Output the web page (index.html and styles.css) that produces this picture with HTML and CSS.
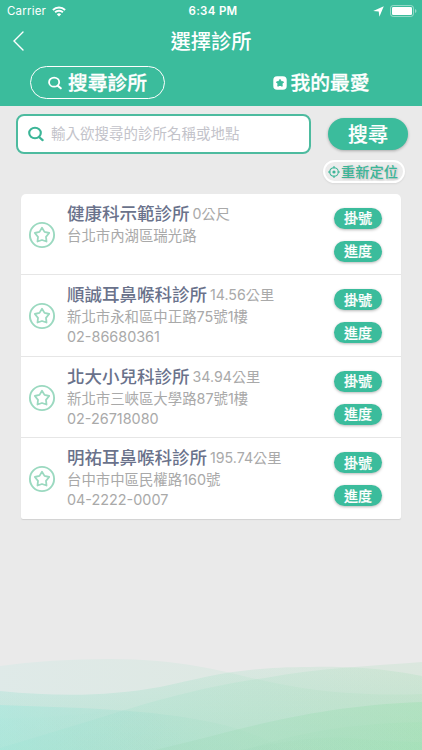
FILE: index.html
```html
<!DOCTYPE html>
<html lang="zh-Hant">
<head>
    <meta charset="utf-8">
    <meta name="viewport" content="width=device-width, initial-scale=1">
    <title>選擇診所</title>
    <link rel="stylesheet" href="styles.css">
</head>
<body>
    <svg class="symbols" aria-hidden="true">
        <symbol id="icon-search" viewBox="0 0 16 16">
            <ellipse cx="7" cy="7" rx="5.8" ry="5.2" fill="none" stroke="currentColor" stroke-width="2.1"/>
            <path d="M11 11l3.6 3.1" fill="none" stroke="currentColor" stroke-width="2.3" stroke-linecap="round"/>
        </symbol>
        <symbol id="icon-star" viewBox="0 0 28 28">
            <circle cx="14" cy="14" r="12.1" fill="none" stroke="currentColor" stroke-width="1.9"/>
            <path d="M14 6.8l2.5 4.1 4.7 1.1-3.2 3.8.5 4.7-4.5-1.5-4.5 1.5.5-4.7L6.800 12l4.700-1.100z" fill="none" stroke="currentColor" stroke-width="1.8" stroke-linejoin="round"/>
        </symbol>
    </svg>

    <header class="header">
        <div class="status-bar">
            <div class="carrier">
                <span>Carrier</span>
                <svg class="wifi" viewBox="0 0 14 11">
                    <path d="M.9 4a8.7 8.7 0 0 1 12.2 0M3.1 6.3a5.6 5.6 0 0 1 7.8 0" fill="none" stroke="#fff" stroke-width="1.9"/>
                    <path d="M7 10.6L4.8 8.3a3.1 3.1 0 0 1 4.4 0z" fill="#fff"/>
                </svg>
            </div>
            <span class="time">6:34 PM</span>
            <div class="indicators">
                <svg class="location" viewBox="0 0 10 10"><path d="M9.8.2L5.8 9.8 5.2 5 .2 4.5z" fill="#fff"/></svg>
                <svg class="battery" viewBox="0 0 27 12">
                    <rect x=".5" y=".5" width="23" height="11" rx="2.7" fill="none" stroke="#fff" stroke-opacity=".45"/>
                    <rect x="2" y="2" width="20" height="8" rx="1.3" fill="#fff"/>
                    <path d="M25 4a2.1 2.1 0 0 1 0 4z" fill="#fff" fill-opacity=".45"/>
                </svg>
            </div>
        </div>
        <div class="title-bar">
            <svg class="back" viewBox="0 0 11 20"><path d="M10 1L1 10l9 9" fill="none" stroke="#fff" stroke-width="1.4" stroke-linecap="round"/></svg>
            <h1>選擇診所</h1>
        </div>
        <nav class="tabs">
            <a class="tab active">
                <svg class="tab-search"><use href="#icon-search"/></svg>
                <span>搜尋診所</span>
            </a>
            <a class="tab">
                <svg class="tab-star" viewBox="0 0 14 14">
                    <rect x=".3" y=".3" width="13.4" height="13.4" rx="3.8" fill="#fff"/>
                    <path d="M7 3.4l1.2 2 2.4.6-1.6 1.8.2 2.4L7 9.300l-2.200.9.200-2.400L3.400 6l2.400-.6z" fill="#3bbc9c" stroke="#3bbc9c" stroke-width="1" stroke-linejoin="round"/>
                </svg>
                <span>我的最愛</span>
            </a>
        </nav>
    </header>

    <main class="content">
        <div class="search">
            <div class="search-box">
                <svg class="search-icon"><use href="#icon-search"/></svg>
                <span>輸入欲搜尋的診所名稱或地點</span>
            </div>
            <div class="search-actions">
                <button class="btn btn-search">搜尋</button>
                <button class="btn-locate">
                    <svg viewBox="0 0 12 12">
                        <circle cx="6" cy="6" r="4.3" fill="none" stroke="currentColor" stroke-width="1.1"/>
                        <circle cx="6" cy="6" r="1.6" fill="currentColor"/>
                        <path d="M6 0v2.5M6 9.5v2.5M0 6h2.5M9.5 6h2.5" stroke="currentColor" stroke-width="1.1"/>
                    </svg>
                    <span>重新定位</span>
                </button>
            </div>
        </div>

        <ul class="clinic-list">
            <li class="clinic">
                <svg class="favorite"><use href="#icon-star"/></svg>
                <div class="info">
                    <div class="heading"><h2>健康科示範診所</h2><span>0公尺</span></div>
                    <p>台北市內湖區瑞光路</p>
                </div>
                <div class="actions">
                    <button class="btn btn-small">掛號</button>
                    <button class="btn btn-small">進度</button>
                </div>
            </li>
            <li class="clinic">
                <svg class="favorite"><use href="#icon-star"/></svg>
                <div class="info">
                    <div class="heading"><h2>順誠耳鼻喉科診所</h2><span>14.56公里</span></div>
                    <p>新北市永和區中正路75號1樓</p>
                    <p class="phone">02-86680361</p>
                </div>
                <div class="actions">
                    <button class="btn btn-small">掛號</button>
                    <button class="btn btn-small">進度</button>
                </div>
            </li>
            <li class="clinic">
                <svg class="favorite"><use href="#icon-star"/></svg>
                <div class="info">
                    <div class="heading"><h2>北大小兒科診所</h2><span>34.94公里</span></div>
                    <p>新北市三峽區大學路87號1樓</p>
                    <p class="phone">02-26718080</p>
                </div>
                <div class="actions">
                    <button class="btn btn-small">掛號</button>
                    <button class="btn btn-small">進度</button>
                </div>
            </li>
            <li class="clinic">
                <svg class="favorite"><use href="#icon-star"/></svg>
                <div class="info">
                    <div class="heading"><h2>明祐耳鼻喉科診所</h2><span>195.74公里</span></div>
                    <p>台中市中區民權路160號</p>
                    <p class="phone">04-2222-0007</p>
                </div>
                <div class="actions">
                    <button class="btn btn-small">掛號</button>
                    <button class="btn btn-small">進度</button>
                </div>
            </li>
        </ul>
    </main>

    <svg class="waves" viewBox="0 0 422 110" preserveAspectRatio="none">
        <defs>
            <linearGradient id="mist" x1="0" x2="1"><stop offset="0" stop-color="#b8e9e1" stop-opacity=".22"/><stop offset="1" stop-color="#a8ddb5" stop-opacity=".18"/></linearGradient>
            <linearGradient id="teal" x1="0" x2="1"><stop offset="0" stop-color="#a4e4dc" stop-opacity=".28"/><stop offset="1" stop-color="#a0dcb0" stop-opacity=".2"/></linearGradient>
            <linearGradient id="aqua" x1="0" x2="1"><stop offset="0" stop-color="#96e8dc" stop-opacity=".38"/><stop offset=".5" stop-color="#96dccb" stop-opacity=".24"/><stop offset="1" stop-color="#9cdcb4" stop-opacity=".05"/></linearGradient>
            <linearGradient id="haze" x1="0" y1="0" x2="0" y2="1"><stop offset="0" stop-color="#98dcbc" stop-opacity="0"/><stop offset="1" stop-color="#98dcbc" stop-opacity=".3"/></linearGradient>
            <linearGradient id="leaf" x1="0" x2="1"><stop offset="0" stop-color="#9cd8b8" stop-opacity=".28"/><stop offset="1" stop-color="#96dfac" stop-opacity=".36"/></linearGradient>
        </defs>
        <path d="M0 26Q50 19 110 19C190 19 230 34 270 42C320 53 375 56 422 54V110H0z" fill="url(#mist)"/>
        <path d="M0 51C60 57 110 56 160 47C210 36 240 27 310 27C360 26 390 30 422 36V110H0z" fill="url(#teal)"/>
        <path d="M0 108Q60 90 112 74C170 56 215 45 265 38C320 28 370 26 422 22V110H0z" fill="url(#teal)"/>
        <path d="M0 51C60 57 110 56 160 47C210 36 240 27 310 27C360 26 390 30 422 36V110H0z" fill="url(#haze)"/>
        <path d="M0 65C70 68 150 68 220 84Q260 94 285 110H0z" fill="url(#aqua)"/>
        <path d="M0 78Q55 79 110 70L155 75L195 110H0z" fill="url(#aqua)" opacity=".15"/>
        <path d="M155 110C240 90 310 66 422 62V110z" fill="url(#leaf)"/>
        <path d="M245 110C310 88 370 83 422 82V110z" fill="url(#leaf)" opacity=".4"/>
        <path d="M240 110Q310 95 350 98Q395 102 422 102V110z" fill="url(#leaf)" opacity=".4"/>
    </svg>
</body>
</html>
```
FILE: styles.css
```css
* {
    margin: 0;
    padding: 0;
    box-sizing: border-box;
}

body {
    position: relative;
    height: 750px;
    overflow: hidden;
    background: #eaeaea;
    color: #9b9b9b;
    font-family: Inter, 'Noto Sans CJK TC', sans-serif;
}

svg {
    display: block;
    flex-shrink: 0;
}

.symbols {
    position: absolute;
    width: 0;
    height: 0;
}

.header {
    height: 106px;
    background: #3bbc9c;
    color: white;
}

.status-bar {
    display: grid;
    grid-template-columns: 1fr auto 1fr;
    align-items: center;
    height: 22px;
    padding: 0 5px 0 7px;
    font-size: 11.5px;
    letter-spacing: 0.2px;
}

.carrier,
.indicators {
    display: flex;
    align-items: center;
    gap: 6px;
}

.indicators {
    justify-content: flex-end;
}

.wifi {
    width: 14px;
    height: 11px;
}

.time {
    font-weight: 600;
    letter-spacing: 0.3px;
    padding-left: 2px;
}

.location {
    width: 11px;
    height: 11px;
}

.battery {
    width: 27px;
    height: 12px;
}

.title-bar {
    display: grid;
    grid-template-columns: 1fr auto 1fr;
    align-items: center;
    height: 38px;
    padding: 0 13px;
}

.back {
    width: 11px;
    height: 20px;
}

h1 {
    padding-top: 2px;
    font-size: 20.3px;
    font-weight: 500;
    line-height: 30px;
}

.tabs {
    display: grid;
    grid-template-columns: 135px 97px;
    justify-content: space-between;
    padding: 6px 52px 0 30px;
}

.tab {
    display: flex;
    align-items: center;
    justify-content: center;
    gap: 3px;
    height: 33px;
    font-size: 19.8px;
    font-weight: 500;
    line-height: 30px;
    white-space: nowrap;
    -webkit-text-stroke: 0.3px currentColor;
}

.tab.active {
    gap: 6px;
    border: 1.5px solid white;
    border-radius: 17px;
}

.tab-search,
.tab-star {
    width: 14px;
    height: 14px;
}

.content {
    padding: 8px 21px 0;
}

.search {
    display: flex;
    justify-content: space-between;
    margin: 0 -7px 0 -5px;
}

.search-box {
    display: flex;
    align-items: center;
    gap: 7px;
    width: 295px;
    height: 40px;
    padding-left: 10px;
    background: white;
    border: 2px solid #4dbb9f;
    border-radius: 8px;
    color: #c3c3ca;
    font-size: 14.5px;
    white-space: nowrap;
}

.search-box span {
    line-height: 20px;
}

.search-icon {
    width: 16px;
    height: 16px;
    color: #3bb597;
}

.search-actions {
    display: flex;
    flex-direction: column;
    align-items: flex-end;
    width: 86px;
    padding-top: 4px;
}

.btn {
    border: none;
    background: #3bbc9c;
    color: white;
    font-family: inherit;
    font-weight: 500;
    box-shadow: 0 1px 3px rgba(0, 0, 0, 0.28);
    -webkit-text-stroke: 0.2px currentColor;
}

.btn-search {
    width: 80px;
    height: 32px;
    padding-top: 1px;
    border-radius: 16px;
    font-size: 20px;
    line-height: 30px;
}

.btn-locate {
    display: flex;
    align-items: center;
    justify-content: center;
    gap: 1px;
    width: 82px;
    height: 23px;
    margin: 10px 3px 0 0;
    padding-right: 2px;
    border: 2px solid white;
    border-radius: 12px;
    background: #ececec;
    color: #3bb597;
    font-family: inherit;
    font-size: 14.2px;
    font-weight: 500;
    line-height: 19px;
    white-space: nowrap;
    text-shadow: 1px 1px 2px rgba(0, 0, 0, 0.2);
    box-shadow: 0 1px 2px rgba(0, 0, 0, 0.08);
}

.btn-locate svg {
    width: 12px;
    height: 12px;
}

.clinic-list {
    margin-top: 10.5px;
    background: white;
    border-radius: 5px 5px 2px 2px;
    box-shadow: 0 1px 1px rgba(0, 0, 0, 0.1);
    list-style: none;
}

.clinic {
    display: flex;
    height: 81.5px;
    padding: 0 19px 0 7px;
    border-bottom: 1px solid #e6e6e6;
}

.clinic:last-child {
    height: 81px;
    border-bottom: none;
}

.favorite {
    width: 28px;
    height: 28px;
    margin-top: 27px;
    color: #9bd9c0;
}

.info {
    flex: 1;
    padding: 8px 0 0 11px;
    font-size: 14.4px;
    line-height: 21px;
    white-space: nowrap;
}

.info p {
    color: #a9a9a9;
}

.heading {
    display: flex;
    align-items: center;
    gap: 3px;
    height: 23px;
}

h2 {
    color: #6a728b;
    font-size: 17.5px;
    font-weight: 500;
    line-height: 23px;
}

.heading span {
    color: #a9a9a9;
    font-size: 14.2px;
}

.info .phone {
    line-height: 19px;
}

.actions {
    display: flex;
    flex-direction: column;
    gap: 12px;
    padding-top: 14px;
}

.btn-small {
    width: 48px;
    height: 21px;
    border-radius: 11px;
    font-size: 14px;
    line-height: 20px;
}

.waves {
    position: absolute;
    left: 0;
    bottom: 0;
    width: 100%;
    height: 110px;
}
```
